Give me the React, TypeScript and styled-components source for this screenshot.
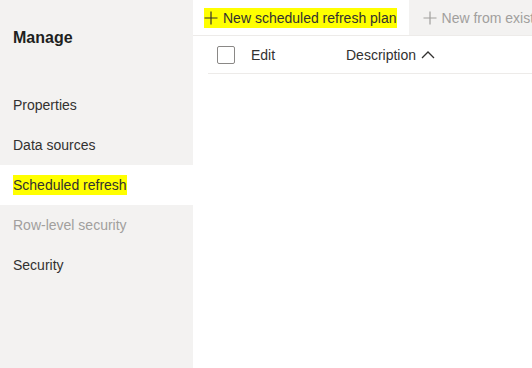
import React from "react";
import styled, { createGlobalStyle } from "styled-components";

const GlobalStyle = createGlobalStyle`
  html, body {
    margin: 0;
    padding: 0;
    background: #fff;
  }
  body {
    font-family: "Liberation Sans", Arial, sans-serif;
    color: #323130;
  }
`;

const Page = styled.div`
  display: flex;
  width: 532px;
  height: 368px;
  overflow: hidden;
`;

const Sidebar = styled.nav`
  width: 193px;
  flex-shrink: 0;
  background: #f3f2f1;
  display: flex;
  flex-direction: column;
`;

const Title = styled.h2`
  margin: 0;
  height: 85px;
  padding: 28px 0 0 13px;
  box-sizing: border-box;
  font-size: 16px;
  font-weight: bold;
  line-height: 20px;
  color: #201f1e;
`;

const NavItem = styled.div<{ $selected?: boolean; $disabled?: boolean }>`
  height: 40px;
  display: flex;
  align-items: center;
  padding-left: 13px;
  font-size: 14px;
  background: ${(p) => (p.$selected ? "#fff" : "transparent")};
  color: ${(p) => (p.$disabled ? "#a19f9d" : "#323130")};
`;

const Marker = styled.span`
  background: #ffff00;
  line-height: 20px;
  display: inline-flex;
  align-items: center;
  gap: 5px;
`;

const Main = styled.main`
  flex: 1;
  min-width: 0;
  display: flex;
  flex-direction: column;
`;

const CommandBar = styled.div`
  display: flex;
  height: 35px;
  border-bottom: 1px solid #edebe9;
  background: #f3f2f1;
  overflow: hidden;
`;

const CommandButton = styled.div<{ $active?: boolean; $disabled?: boolean }>`
  display: flex;
  align-items: center;
  gap: 5px;
  padding: 0 12px 0 ${(p) => (p.$active ? "11px" : "14px")};
  background: ${(p) => (p.$active ? "#fff" : "transparent")};
  color: ${(p) => (p.$disabled ? "#a19f9d" : "#323130")};
  font-size: 14px;
  white-space: nowrap;
`;

const TableHeader = styled.div`
  display: flex;
  align-items: center;
  height: 37px;
  margin-left: 15px;
  border-bottom: 1px solid #edebe9;
  font-size: 14px;
  color: #323130;
`;

const CheckCell = styled.div`
  box-sizing: border-box;
  width: 43px;
  padding-left: 9px;
  display: flex;
  align-items: center;
`;

const Checkbox = styled.div`
  width: 16px;
  height: 16px;
  border: 1px solid #8a8886;
  border-radius: 2px;
`;

const HeaderCell = styled.div<{ $width?: number }>`
  width: ${(p) => (p.$width ? `${p.$width}px` : "auto")};
  display: flex;
  align-items: center;
  gap: 5px;
  white-space: nowrap;
`;

const Plus = ({ color }: { color: string }) => (
  <svg width="14" height="14" viewBox="0 0 14 14">
    <path d="M7 0.5V13.5M0.5 7H13.5" stroke={color} strokeWidth="1.2" fill="none" />
  </svg>
);

const ChevronUp = () => (
  <svg width="14" height="9" viewBox="0 0 14 9">
    <path d="M1 8L7 2L13 8" stroke="#323130" strokeWidth="1.3" fill="none" />
  </svg>
);

export default function App() {
  return (
    <Page>
      <GlobalStyle />
      <Sidebar>
        <Title>Manage</Title>
        <NavItem>Properties</NavItem>
        <NavItem>Data sources</NavItem>
        <NavItem $selected>
          <Marker>Scheduled refresh</Marker>
        </NavItem>
        <NavItem $disabled>Row-level security</NavItem>
        <NavItem>Security</NavItem>
      </Sidebar>
      <Main>
        <CommandBar>
          <CommandButton $active>
            <Marker>
              <Plus color="#323130" />
              New scheduled refresh plan
            </Marker>
          </CommandButton>
          <CommandButton $disabled>
            <Plus color="#a19f9d" />
            New from existing
          </CommandButton>
        </CommandBar>
        <TableHeader>
          <CheckCell>
            <Checkbox />
          </CheckCell>
          <HeaderCell $width={95}>Edit</HeaderCell>
          <HeaderCell>
            Description
            <ChevronUp />
          </HeaderCell>
        </TableHeader>
      </Main>
    </Page>
  );
}
